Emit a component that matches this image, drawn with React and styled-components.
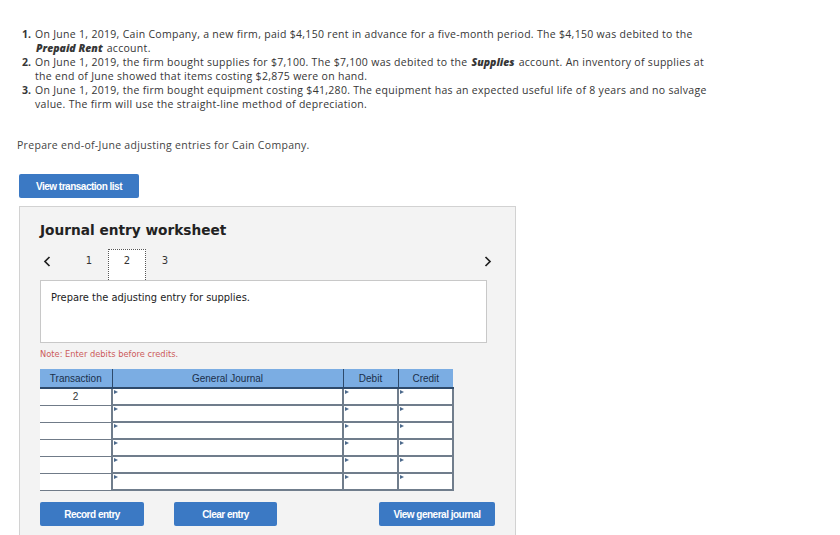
import React from 'react'
import styled, { createGlobalStyle } from 'styled-components'

const Global = createGlobalStyle`
  body {
    margin: 0;
    background: #fff;
    font-family: "Open Sans", "Liberation Sans", sans-serif;
  }
`

const Page = styled.div`
  padding: 27px 0 0 0;
  width: 840px;
  height: 535px;
  overflow: hidden;
  box-sizing: border-box;
`

const List = styled.ol`
  list-style: none;
  margin: 0;
  padding: 0 0 0 22px;
  width: 697px;
  color: #363636;
  font-size: 10.5px;
  letter-spacing: 0.3px;
  line-height: 14px;
`

const Item = styled.li`
  display: flex;
`

const Num = styled.span`
  flex: 0 0 13px;
  font-weight: 700;
  letter-spacing: 0;
`

const Term = styled.b`
  font-style: italic;
  font-weight: 800;
  letter-spacing: 0;
  padding: 0 1px;
`

const Intro = styled.p`
  margin: 27px 0 0 17px;
  font-size: 10.5px;
  letter-spacing: 0.3px;
  color: #444;
`

const Btn = styled.button`
  flex-shrink: 0;
  width: ${p => p.$w}px;
  height: 24px;
  border: none;
  border-radius: 2px;
  background: #3b79c4;
  color: #fff;
  font-family: "Liberation Sans", Arial, sans-serif;
  font-size: 10px;
  font-weight: 700;
  letter-spacing: -0.5px;
  padding: 0;
  cursor: pointer;
`

const TopBtn = styled(Btn)`
  margin: 22px 0 0 19px;
  display: block;
`

const PushedBtn = styled(Btn)`
  margin-left: ${p => p.$push}px;
`

const Worksheet = styled.div`
  margin: 8px 0 0 19px;
  width: 497px;
  height: 340px;
  box-sizing: border-box;
  background: #f3f3f3;
  border: 1px solid #d2d2d2;
  border-bottom: none;
  padding: 14px 0 0 20px;
  font-family: "DejaVu Sans", Verdana, sans-serif;
`

const Title = styled.h2`
  margin: 0;
  font-size: 13.7px;
  line-height: 18px;
  font-weight: 700;
  color: #222;
`

const Tabs = styled.div`
  display: flex;
  align-items: flex-start;
  width: 452px;
  margin-top: 10px;
  height: 31px;
`

const Arrow = styled.span`
  width: ${p => p.$w || 27}px;
  padding-top: 7px;
  display: flex;
  justify-content: ${p => p.$right ? 'flex-end' : 'flex-start'};
  margin-left: ${p => p.$right ? 'auto' : '3px'};
`

const Tab = styled.span`
  width: 38px;
  height: 31px;
  box-sizing: border-box;
  text-align: center;
  padding-top: 5px;
  font-size: 10px;
  color: #333;
  background: ${p => p.$active ? '#fff' : 'transparent'};
  border: 1px dotted ${p => p.$active ? '#555' : 'transparent'};
  border-bottom: none;
  position: relative;
  z-index: 1;
`

const Prompt = styled.div`
  width: 447px;
  height: 63px;
  box-sizing: border-box;
  background: #fff;
  border: 1px solid #c8c8c8;
  padding: 11px 10px;
  font-size: 9.9px;
  color: #222;
`

const Note = styled.div`
  margin-top: 6px;
  font-size: 8.3px;
  color: #cc5b5b;
`

const Table = styled.table`
  margin-top: 10px;
  border-collapse: collapse;
  table-layout: fixed;
  width: 413px;
  font-family: "Liberation Sans", Arial, sans-serif;
`

const Th = styled.th`
  height: 18px;
  padding: 0;
  background: #7badE3;
  color: #1a2f4a;
  font-size: 10px;
  font-weight: 400;
  border-bottom: 2px solid #2e4a6b;
  border-left: ${p => p.$first ? 'none' : '1px solid #2e4a6b'};
`

const TdTrans = styled.td`
  height: 15px;
  padding: 0;
  text-align: center;
  font-size: 10px;
  color: #333;
  background: #fff;
  border-bottom: 1px solid #707b88;
  vertical-align: middle;
`

const TdInput = styled.td`
  position: relative;
  height: 15px;
  padding: 0;
  background: #fff;
  border: 2px solid #707d8c;
  &::before {
    content: "";
    position: absolute;
    left: 1px;
    top: 1px;
    border-left: 4px solid #4d6a8c;
    border-top: 2px solid transparent;
    border-bottom: 2px solid transparent;
  }
`

const Actions = styled.div`
  display: flex;
  margin-top: 11px;
  gap: 30px;
`

const Chevron = ({ dir }) => (
  <svg width="8" height="11" viewBox="0 0 8 11">
    <path
      d={dir === 'left' ? 'M6.5 1 L2 5.5 L6.5 10' : 'M1.5 1 L6 5.5 L1.5 10'}
      fill="none"
      stroke="#1f1f1f"
      strokeWidth="1.7"
    />
  </svg>
)

const rows = ['2', '', '', '', '', '']

export default function App() {
  return (
    <Page>
      <Global />
      <List>
        <Item>
          <Num>1.</Num>
          <span>
            On June 1, 2019, Cain Company, a new firm, paid $4,150 rent in advance for a five-month period. The $4,150 was debited to the <Term>Prepaid Rent</Term> account.
          </span>
        </Item>
        <Item>
          <Num>2.</Num>
          <span>
            On June 1, 2019, the firm bought supplies for $7,100. The $7,100 was debited to the <Term>Supplies</Term> account. An inventory of supplies at the end of June showed that items costing $2,875 were on hand.
          </span>
        </Item>
        <Item>
          <Num>3.</Num>
          <span>
            On June 1, 2019, the firm bought equipment costing $41,280. The equipment has an expected useful life of 8 years and no salvage value. The firm will use the straight-line method of depreciation.
          </span>
        </Item>
      </List>
      <Intro>Prepare end-of-June adjusting entries for Cain Company.</Intro>
      <TopBtn $w={120}>View transaction list</TopBtn>
      <Worksheet>
        <Title>Journal entry worksheet</Title>
        <Tabs>
          <Arrow><Chevron dir="left" /></Arrow>
          <Tab>1</Tab>
          <Tab $active>2</Tab>
          <Tab>3</Tab>
          <Arrow $right $w={20}><Chevron dir="right" /></Arrow>
        </Tabs>
        <Prompt>Prepare the adjusting entry for supplies.</Prompt>
        <Note>Note: Enter debits before credits.</Note>
        <Table>
          <colgroup>
            <col style={{ width: 72 }} />
            <col style={{ width: 231 }} />
            <col style={{ width: 55 }} />
            <col style={{ width: 55 }} />
          </colgroup>
          <thead>
            <tr>
              <Th $first>Transaction</Th>
              <Th>General Journal</Th>
              <Th>Debit</Th>
              <Th>Credit</Th>
            </tr>
          </thead>
          <tbody>
            {rows.map((r, i) => (
              <tr key={i}>
                <TdTrans>{r}</TdTrans>
                <TdInput />
                <TdInput />
                <TdInput />
              </tr>
            ))}
          </tbody>
        </Table>
        <Actions>
          <Btn $w={104}>Record entry</Btn>
          <Btn $w={103}>Clear entry</Btn>
          <PushedBtn $w={116} $push={72}>View general journal</PushedBtn>
        </Actions>
      </Worksheet>
    </Page>
  )
}
